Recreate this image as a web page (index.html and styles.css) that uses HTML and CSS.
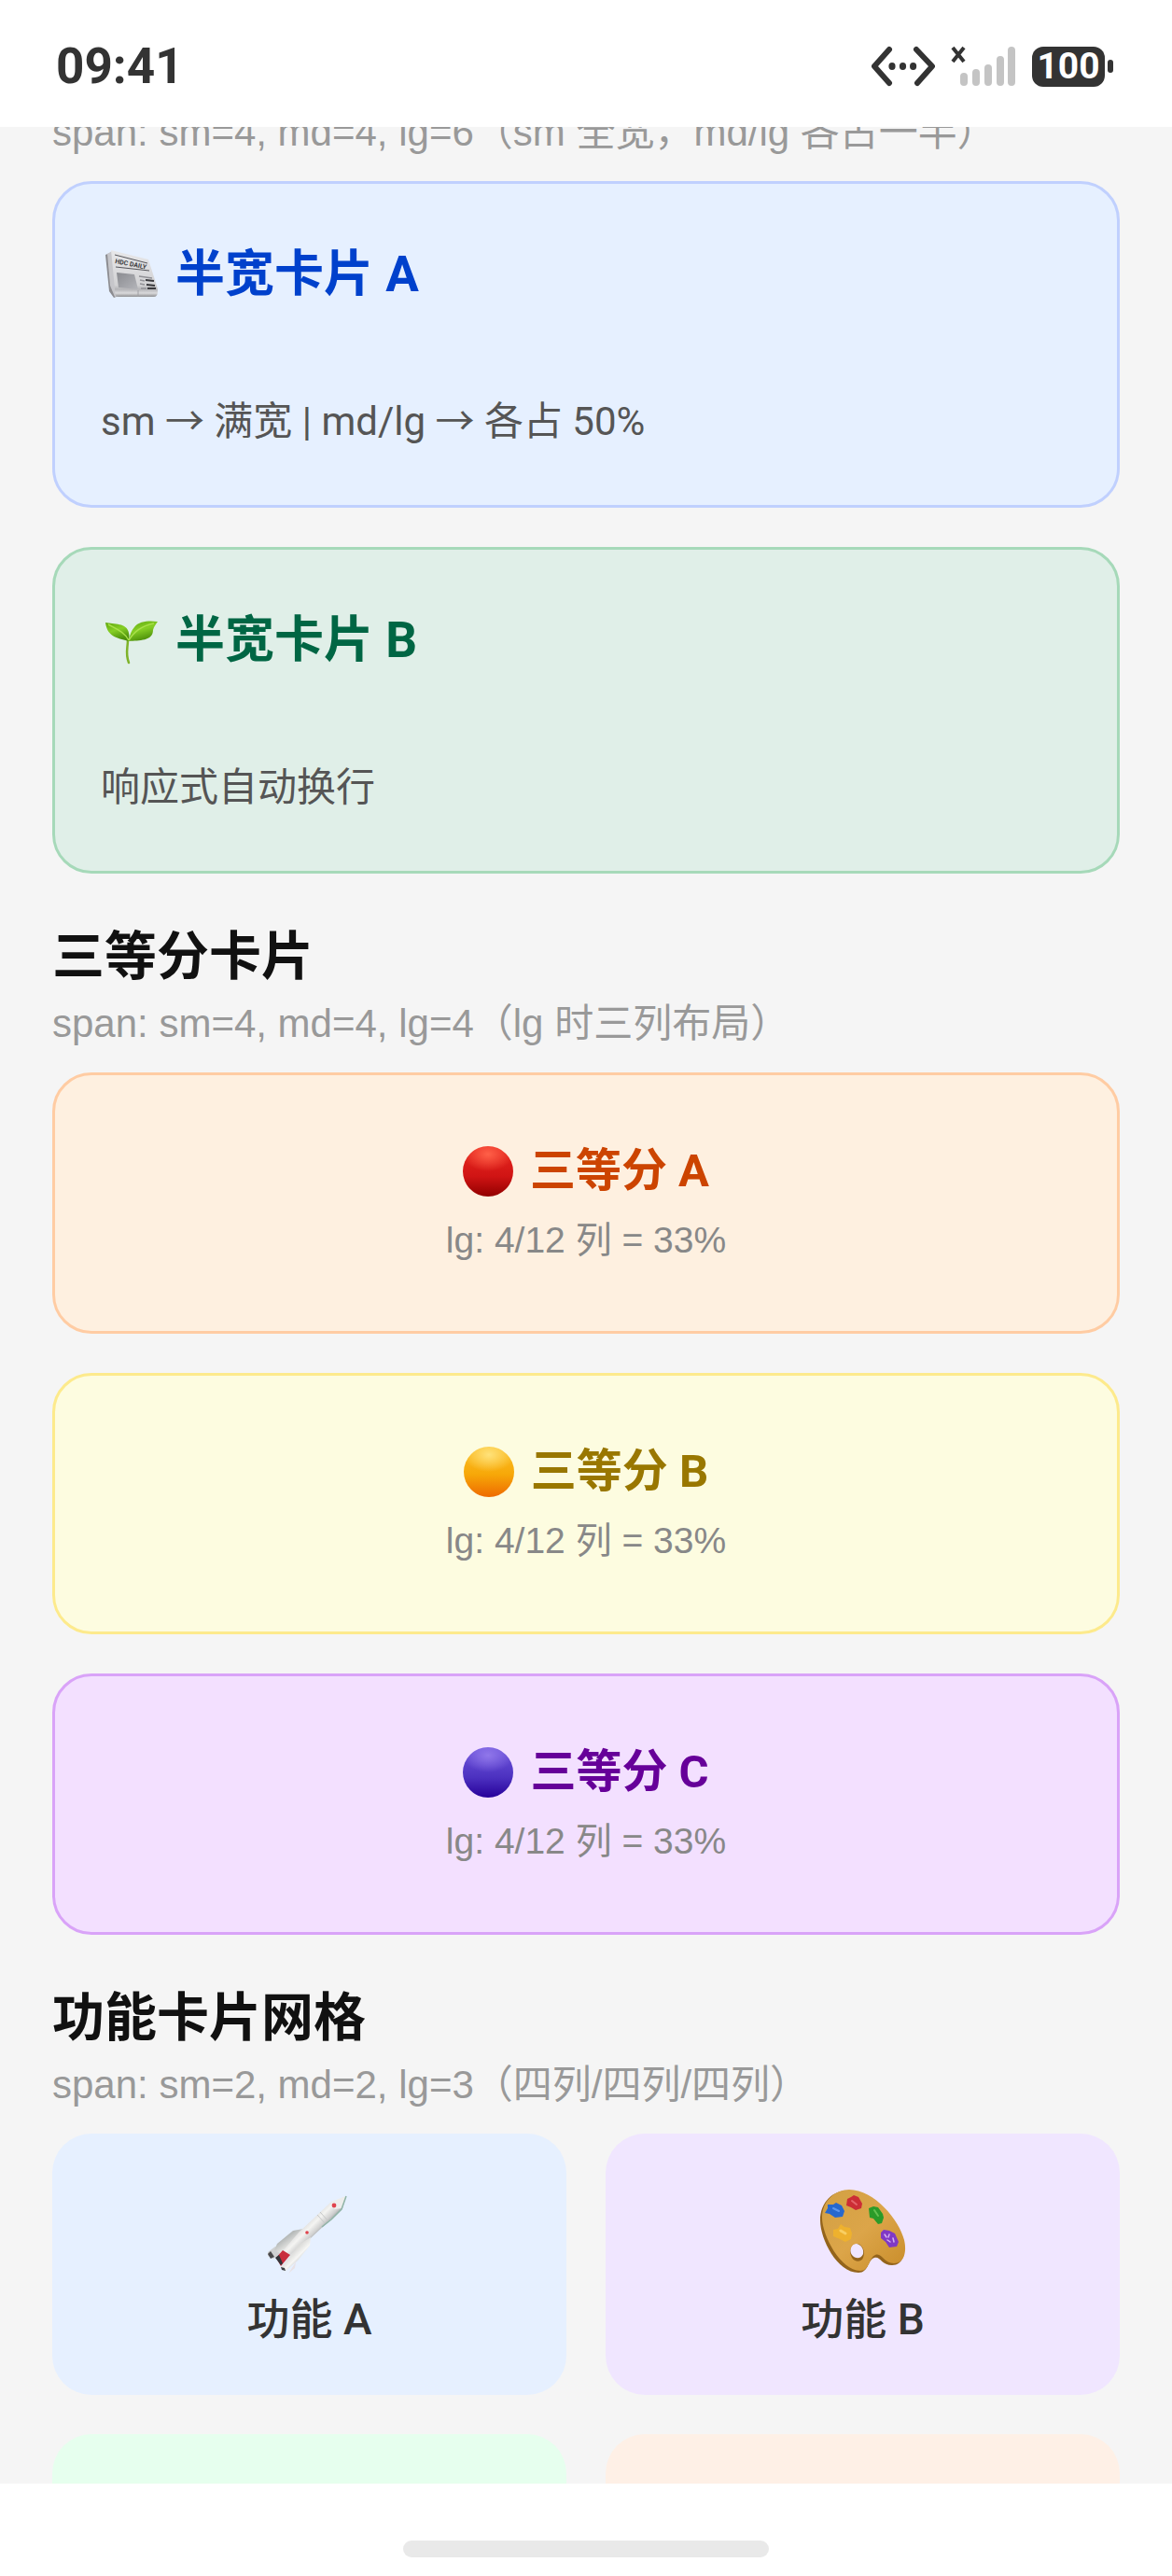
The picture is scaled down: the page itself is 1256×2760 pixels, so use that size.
FILE: index.html
```html
<!DOCTYPE html>
<html lang="zh-CN">
<head>
<meta charset="utf-8">
<meta name="viewport" content="width=device-width, initial-scale=1">
<title>栅格卡片</title>
<link rel="stylesheet" href="styles.css">
</head>
<body>
<header class="status-bar">
  <time class="clock">09:41</time>
  <div class="indicators">
    <svg class="net-icon" width="68" height="44" viewBox="0 0 68 44" fill="none" stroke="#333" stroke-width="6" stroke-linecap="round" stroke-linejoin="round" aria-hidden="true">
      <path d="M19 4 3 22l16 18M48 4l17 18-16 18"/>
      <g fill="#333" stroke="none"><ellipse cx="22" cy="22" rx="3.6" ry="4"/><ellipse cx="33.500" cy="22" rx="3.600" ry="4"/><ellipse cx="44.600" cy="22" rx="3.600" ry="4"/></g>
    </svg>
    <svg class="signal-icon" width="72" height="44" viewBox="0 0 72 44" aria-hidden="true">
      <path d="M3 2 15 17M15 2 3 17" stroke="#333" stroke-width="4" fill="none"/>
      <g fill="#c4c4c4"><rect x="11" y="29" width="8" height="14" rx="4"/><rect x="24" y="25" width="8" height="18" rx="4"/><rect x="37" y="20" width="8" height="23" rx="4"/><rect x="50" y="11" width="8" height="32" rx="4"/><rect x="62" y="1" width="8" height="42" rx="4"/></g>
    </svg>
    <div class="battery"><span class="battery-level">100</span><span class="battery-cap"></span></div>
  </div>
</header>

<main class="viewport">
  <div class="content">
    <section>
      <p class="subtitle">span: sm=4, md=4, lg=6（sm 全宽，md/lg 各占一半）</p>
      <div class="stack stack-first">
        <article class="card half half-a">
          <h3 class="half-title">
            <svg width="58" height="58" viewBox="0 0 58 58" aria-hidden="true">
              <defs>
                <linearGradient id="paper" x1="0" y1="0" x2="0" y2="1"><stop offset="0" stop-color="#e8e8ea"/><stop offset=".75" stop-color="#d2d2d4"/><stop offset=".84" stop-color="#b4b4b7"/><stop offset=".92" stop-color="#dadadc"/><stop offset="1" stop-color="#8f8f92"/></linearGradient>
                <linearGradient id="photo" x1="0" y1="0" x2="1" y2="1"><stop offset="0" stop-color="#8a8b90"/><stop offset="1" stop-color="#b4b5ba"/></linearGradient>
              </defs>
              <path d="M1 8 8 5l7 47-5 2-5-7Z" fill="#8c8c90"/>
              <path d="M3 7 8 4l6 48-3 1-5-12Z" fill="#c6c6ca"/>
              <path d="M7 3 47 13l8 25c3 8 3 15-2 15H15c-4 0-4-5-4-9Z" fill="url(#paper)"/>
              <path d="M11 8l35 9M12 21l36 4" stroke="#55555a" stroke-width="1"/>
              <text x="11" y="17" transform="rotate(11 11 17)" class="masthead">HDC DAILY</text>
              <path d="M13 27l19 2 4 16-21-2Z" fill="url(#photo)"/>
              <path d="M37 31l14 2M38 35l5 1M38 39l5 1M39 44h6" stroke="#909095" stroke-width="1.500"/>
              <path d="M44 35l9 1M45 40l9 1M46 44h9" stroke="#38383c" stroke-width="2"/>
              <path d="M36 46v7" stroke="#a0a0a4" stroke-width="1"/>
            </svg>
            <span>半宽卡片 A</span>
          </h3>
          <p class="half-text">sm → 满宽 | md/lg → 各占 50%</p>
        </article>
        <article class="card half half-b">
          <h3 class="half-title">
            <svg width="58" height="58" viewBox="0 0 58 58" aria-hidden="true">
              <defs>
                <linearGradient id="leaf" x1="0" y1="0" x2=".4" y2="1"><stop offset="0" stop-color="#5fa80e"/><stop offset=".5" stop-color="#86cf25"/><stop offset="1" stop-color="#4c8f0a"/></linearGradient>
              </defs>
              <path d="M25 28c0 10-3 15 1 25" fill="none" stroke="#7fb32a" stroke-width="2.500" stroke-linecap="round"/>
              <path d="M1 10c9 2 23 0 25 11 1 4 0 6 0 9C17 27 3 27 1 10Z" fill="url(#leaf)"/>
              <path d="M57 9c-8-1-20-1-25 6-4 5-5 9-6 15 11-1 26 0 26-12 1-4 3-6 5-9Z" fill="url(#leaf)"/>
              <path d="M4 12c9 5 17 8 22 17M53 11C42 13 32 19 26 29" fill="none" stroke="#a9e04a" stroke-width="1.500"/>
            </svg>
            <span>半宽卡片 B</span>
          </h3>
          <p class="half-text">响应式自动换行</p>
        </article>
      </div>
    </section>

    <section>
      <div class="section-head">
        <h2 class="heading">三等分卡片</h2>
        <p class="subtitle">span: sm=4, md=4, lg=4（lg 时三列布局）</p>
      </div>
      <div class="stack">
        <article class="card third third-a">
          <h3 class="third-title"><span class="ball ball-red"></span><span>三等分 A</span></h3>
          <p class="third-text">lg: 4/12 列 = 33%</p>
        </article>
        <article class="card third third-b">
          <h3 class="third-title"><span class="ball ball-amber"></span><span>三等分 B</span></h3>
          <p class="third-text">lg: 4/12 列 = 33%</p>
        </article>
        <article class="card third third-c">
          <h3 class="third-title"><span class="ball ball-violet"></span><span>三等分 C</span></h3>
          <p class="third-text">lg: 4/12 列 = 33%</p>
        </article>
      </div>
    </section>

    <section>
      <div class="section-head">
        <h2 class="heading">功能卡片网格</h2>
        <p class="subtitle">span: sm=2, md=2, lg=3（四列/四列/四列）</p>
      </div>
      <div class="feature-grid">
        <article class="feature feature-a">
          <svg width="98" height="98" viewBox="0 0 98 98" aria-hidden="true">
            <defs>
              <linearGradient id="hull" gradientUnits="userSpaceOnUse" x1="50" y1="34" x2="64" y2="48"><stop offset="0" stop-color="#dcdcdc"/><stop offset=".35" stop-color="#f4f4f2"/><stop offset=".7" stop-color="#d0d0d0"/><stop offset="1" stop-color="#8c9291"/></linearGradient>
              <linearGradient id="boost" gradientUnits="userSpaceOnUse" x1="22" y1="56" x2="32" y2="70"><stop offset="0" stop-color="#b6bab9"/><stop offset=".6" stop-color="#e6e6e4"/><stop offset="1" stop-color="#a6abab"/></linearGradient>
              <linearGradient id="boost2" gradientUnits="userSpaceOnUse" x1="32" y1="70" x2="42" y2="80"><stop offset="0" stop-color="#dcdcda"/><stop offset=".5" stop-color="#f6f6f4"/><stop offset="1" stop-color="#b9bcbd"/></linearGradient>
            </defs>
            <path d="M4 71 12 65l12 4-14 9-6-3Z" fill="#cfd1d2"/>
            <path d="M42 46 31 48 14 62 11 69l8 4 18-15Z" fill="url(#boost)"/>
            <path d="M4 73l3-3 4 6-4 2Z" fill="#4a4a4c"/>
            <path d="M88 11 72 17 37 50 20 70l7 5 23-19 34-32Z" fill="url(#hull)"/>
            <path d="M60 28l9 10M57 31l9 10" stroke="#c6c8c8" stroke-width="1"/>
            <path d="M88 11 72 17l3 8 9-1Z" fill="#ededeb"/>
            <path d="M88 11 83 25 72 36 62 44" fill="none" stroke="#8fb3a6" stroke-width="1.500"/>
            <path d="M13 77 20 69l8 5-10 12Z" fill="#c92d3c"/>
            <path d="M12 77l4-3 4 9-2 2Z" fill="#33363a"/>
            <path d="M50 55 37 63 24 80l-6 7 5 4 13-11 13-16Z" fill="url(#boost2)"/>
            <path d="M35 80l-9 14 7-6 1-6Z" fill="#e8e2e6"/>
            <path d="M18 87l4 1 1 3-4-1Z" fill="#3c3f42"/>
            <circle cx="75" cy="21" r="2.400" fill="#e0434c"/><circle cx="46" cy="50" r="1.800" fill="#e0434c"/>
          </svg>
          <h3 class="feature-label">功能 A</h3>
        </article>
        <article class="feature feature-b">
          <svg width="98" height="98" viewBox="0 0 98 98" aria-hidden="true">
            <defs>
              <linearGradient id="wood" x1="0" y1="0" x2="1" y2="1"><stop offset="0" stop-color="#d2a043"/><stop offset=".5" stop-color="#dca549"/><stop offset="1" stop-color="#c98d2a"/></linearGradient>
            </defs>
            <path d="M32 5C17 5 3 17 3 37c0 20 18 56 41 56 11 0 10-14 17-16 6-2 8 8 19 8 12 0 15-13 12-26C88 37 59 5 32 5Zm10 57c5 1 8 6 7 11-2 5-8 6-12 1-4-6 0-13 5-12Z" fill="#94641b" fill-rule="evenodd"/>
            <path d="M34 4C20 4 5 15 5 34c0 19 20 57 41 57 10 0 9-14 16-17 7-3 9 9 20 9 11 0 14-12 11-25C88 37 61 4 34 4Zm8 58c6 0 10 8 7 15-2 5-9 5-12 0-4-7-1-15 5-15Z" fill="url(#wood)" fill-rule="evenodd"/>
            <path d="M11 20 17 20 20 18l6 3 3 6-2 6-8 1-6-4-5-1 3-5Z" fill="#2668ce"/>
            <path d="M17 24l6 3" stroke="#5c96ee" stroke-width="2" stroke-linecap="round"/>
            <path d="M32 14l4-2 3-2 5 2 4 7-1 5-6 2-5-3-5-2Z" fill="#cc2d35"/>
            <path d="M37 16l5 4" stroke="#e4646a" stroke-width="2" stroke-linecap="round"/>
            <path d="M55 24l5-2 5 1 5 7 1 4-2 6-4 1-5-6-4-1Z" fill="#2b9b29"/>
            <path d="M61 26l4 6" stroke="#64c251" stroke-width="2" stroke-linecap="round"/>
            <path d="M17 47l5-1 3-5 4 3 6 1 2 6-1 6-6 3-6-3-7-3Z" fill="#eeb12e"/>
            <path d="M25 48l5 3" stroke="#f9cf62" stroke-width="3" stroke-linecap="round"/>
            <path d="M68 50l3-3 6 1 6 3 4 9-2 5-8 1-4-6-5-4Z" fill="#8039c4"/>
            <path d="M72 52l2 3M77 52l-1 3M75 58l3 2M81 56l1 4" stroke="#d5b0f3" stroke-width="1.500" stroke-linecap="round"/>
          </svg>
          <h3 class="feature-label">功能 B</h3>
        </article>
        <article class="feature feature-c"></article>
        <article class="feature feature-d"></article>
      </div>
    </section>
  </div>
</main>

<footer class="nav-bar"><span class="nav-handle"></span></footer>
</body>
</html>
```
FILE: styles.css
```css
* { box-sizing: border-box; }

body, h2, h3, p { margin: 0; }

body {
  display: flex;
  flex-direction: column;
  height: 100vh;
  background: #fff;
  font-family: Roboto, "Noto Sans CJK SC", sans-serif;
}

/* Status bar */
.status-bar {
  flex: none;
  display: flex;
  align-items: center;
  justify-content: space-between;
  height: 136px;
  padding: 6px 63px 0 60px;
  background: #fff;
}
.clock {
  font-size: 53px;
  line-height: 64px;
  font-weight: 700;
  color: #333;
}
.indicators { display: flex; align-items: center; }
.signal-icon { margin: 0 16px; }
.battery { display: flex; align-items: center; gap: 3px; }
.battery-level {
  width: 78px;
  height: 43px;
  border-radius: 12px;
  background: #333;
  color: #fff;
  font-size: 39px;
  line-height: 43px;
  font-weight: 700;
  text-align: center;
}
.battery-cap {
  width: 6px;
  height: 14px;
  border-radius: 3px;
  background: #333;
}

/* Scrolling area */
.viewport {
  flex: 1;
  min-height: 0;
  overflow: hidden;
  background: #f5f5f5;
}
.content {
  margin-top: -19px;
  padding: 0 56px;
}

.section-head {
  display: flex;
  flex-direction: column;
  gap: 14px;
  padding: 56px 0 27px;
}
.heading {
  font-size: 56px;
  line-height: 66px;
  font-weight: 700;
  color: #111;
}
.subtitle,
.third-text { font-family: "Liberation Sans", "Noto Sans CJK SC", sans-serif; }
.subtitle {
  font-size: 42px;
  line-height: 50px;
  color: #999;
  white-space: nowrap;
}

.stack { display: flex; flex-direction: column; gap: 42px; }
.stack-first { margin-top: 27px; }
.card { border: 3px solid; border-radius: 42px; }

/* Half-width cards */
.half { padding: 66px 49px 64px; }
.half-title {
  display: flex;
  align-items: center;
  gap: 18px;
  padding-left: 4px;
  margin-bottom: 102px;
  font-size: 53px;
  line-height: 62px;
  font-weight: 700;
}
.half-text { font-size: 42px; line-height: 50px; color: #555; }
.half-a { background: #e6f0ff; border-color: #c0d0fe; }
.half-a .half-title { color: #0041cc; }
.half-b { background: #e0efe8; border-color: #a6d9b9; }
.half-b .half-title { color: #006644; }
.masthead { font-size: 7px; font-weight: 700; fill: #3c3c40; }

/* One-third cards */
.third {
  display: flex;
  flex-direction: column;
  align-items: center;
  justify-content: center;
  gap: 22px;
  min-height: 280px;
}
.third-title {
  display: flex;
  align-items: center;
  gap: 18px;
  font-size: 49px;
  line-height: 58px;
  font-weight: 700;
}
.third-text { font-size: 39px; line-height: 46px; color: #888; }
.third-a { background: #fef0e0; border-color: #ffcca3; }
.third-a .third-title { color: #cc4400; }
.third-b { background: #fdfce0; border-color: #fdea8c; }
.third-b .third-title { color: #997700; }
.third-c { background: #f3e0ff; border-color: #d9a3f8; }
.third-c .third-title { color: #660099; }

.ball { width: 54px; height: 54px; border-radius: 50%; }
.ball-red { background: radial-gradient(50% 34% at 50% 16%, #ff6048, rgba(255, 96, 72, 0)), linear-gradient(#e8291f, #d01414 60%, #920000); }
.ball-amber { background: radial-gradient(50% 34% at 50% 16%, #ffe27a, rgba(255, 226, 122, 0)), linear-gradient(#fbc02a, #f7a808 55%, #ee6a00); }
.ball-violet { background: radial-gradient(50% 34% at 50% 16%, #9077ea, rgba(144, 119, 234, 0)), linear-gradient(#6f55dc, #4c31c0 60%, #27009a); }

/* Feature grid */
.feature-grid {
  display: grid;
  grid-template-columns: 1fr 1fr;
  gap: 42px;
}
.feature {
  display: flex;
  flex-direction: column;
  align-items: center;
  justify-content: center;
  gap: 18px;
  min-height: 280px;
  padding-top: 2px;
  border-radius: 42px;
}
.feature-label {
  font-size: 46px;
  line-height: 54px;
  font-weight: 500;
  color: #333;
}
.feature-a { background: #e6f0ff; }
.feature-b { background: #f0e6ff; }
.feature-c { background: #e6ffee; }
.feature-d { background: #fef0e6; }

/* Gesture bar */
.nav-bar {
  flex: none;
  display: flex;
  align-items: flex-end;
  justify-content: center;
  height: 99px;
  padding-bottom: 20px;
  background: #fff;
}
.nav-handle {
  width: 392px;
  height: 18px;
  border-radius: 9px;
  background: #e9e9e9;
}
```
